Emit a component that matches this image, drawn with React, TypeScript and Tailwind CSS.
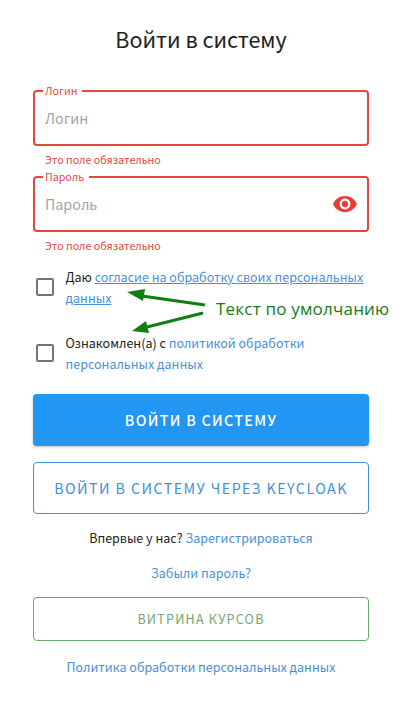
const font = "font-['Noto_Sans_CJK_SC','Noto_Sans',sans-serif]";

function Field({ label, eye }: { label: string; eye?: boolean }) {
  return (
    <div>
      <fieldset className="h-[61px] rounded-[4px] border-2 border-[#e2483d] pl-[10px] pr-[9px]">
        <legend className="-ml-[2px] pl-[2px] pr-[5px] text-[10.7px] leading-[12px] text-[#e2483d]">{label}</legend>
        <div className="flex h-[42px] items-center justify-between">
          <span className="text-[14.3px] text-[#a3a3a3]">{label}</span>
          {eye && (
            <svg viewBox="0 0 24 24" className="h-[26px] w-[26px] fill-[#ec3b33]">
              <path d="M12 4.5C7 4.5 2.73 7.61 1 12c1.73 4.39 6 7.5 11 7.5s9.27-3.11 11-7.5c-1.73-4.39-6-7.5-11-7.5zM12 17c-2.76 0-5-2.24-5-5s2.24-5 5-5 5 2.24 5 5-2.24 5-5 5zm0-8c-1.66 0-3 1.34-3 3s1.34 3 3 3 3-1.34 3-3-1.34-3-3-3z" />
            </svg>
          )}
        </div>
      </fieldset>
      <p className="mt-[6px] pl-[12px] text-[10.7px] leading-[16px] text-[#e2483d]">Это поле обязательно</p>
    </div>
  );
}

function Check({ children }: { children: React.ReactNode }) {
  return (
    <div className="flex items-center">
      <span className="ml-[3px] h-[18px] w-[18px] shrink-0 rounded-[2px] border-2 border-[#757575]" />
      <p className="ml-[11.5px] text-[12.5px] leading-[21px] text-[#212121]">{children}</p>
    </div>
  );
}

export default function App() {
  return (
    <div className={`relative h-[702px] w-[404px] overflow-hidden bg-white pl-[33px] pr-[35px] pt-[24px] ${font}`}>
      <h1 className="text-center text-[21.5px] leading-[30px] text-[#212121]">Войти в систему</h1>

      <form className="mt-[31px]">
        <div className="flex flex-col gap-[3px]">
          <Field label="Логин" />
          <Field label="Пароль" eye />
        </div>

        <div className="mt-[12px] flex flex-col gap-[24px]">
          <Check>
            Даю <a className="text-[#4a90d9] underline">согласие на обработку своих персональных данных</a>
          </Check>
          <Check>
            Ознакомлен(а) с <a className="text-[#4a90d9]">политикой обработки персональных данных</a>
          </Check>
        </div>

        <button type="button" className="mt-[20px] h-[52px] w-full rounded-[4px] bg-[#2196f3] text-[14.3px] font-medium tracking-[1.3px] text-white shadow-[0_1px_3px_rgba(0,0,0,0.25)]">
          ВОЙТИ В СИСТЕМУ
        </button>
        <button type="button" className="mt-[16px] h-[52px] w-full rounded-[4px] border border-[#3f90dc] text-[14.3px] tracking-[1.43px] text-[#3f90dc]">
          ВОЙТИ В СИСТЕМУ ЧЕРЕЗ KEYCLOAK
        </button>
      </form>

      <p className="mt-[14px] text-center text-[12.5px] leading-[20px] text-[#212121]">
        Впервые у нас? <a className="text-[#4a90d9]">Зарегистрироваться</a>
      </p>
      <p className="mt-[15px] text-center text-[12.5px] leading-[20px] text-[#4a90d9]">Забыли пароль?</p>

      <button type="button" className="mt-[14px] h-[44px] w-full rounded-[4px] border border-[#66ab6a] text-[12.5px] tracking-[1.25px] text-[#6fa86f]">
        ВИТРИНА КУРСОВ
      </button>
      <p className="mt-[16px] text-center text-[12.5px] leading-[20px] text-[#4a90d9]">Политика обработки персональных данных</p>

      {/* annotation drawn over the screenshot */}
      <svg className="absolute left-0 top-0" width="404" height="702" viewBox="0 0 404 702">
        <path d="M205 305 L142 296" stroke="#0f7f12" strokeWidth="3" />
        <path d="M127 292 L145 289 L143 301 Z" fill="#0f7f12" />
        <path d="M203 313 L147 327" stroke="#0f7f12" strokeWidth="3" />
        <path d="M132 331 L146 321 L149 333 Z" fill="#0f7f12" />
      </svg>
      <span className="absolute left-[216px] top-[296px] whitespace-nowrap font-['Open_Sans',sans-serif] text-[17px] leading-[26px] tracking-[0.2px] text-[#0f7f12]">
        Текст по умолчанию
      </span>
    </div>
  );
}
